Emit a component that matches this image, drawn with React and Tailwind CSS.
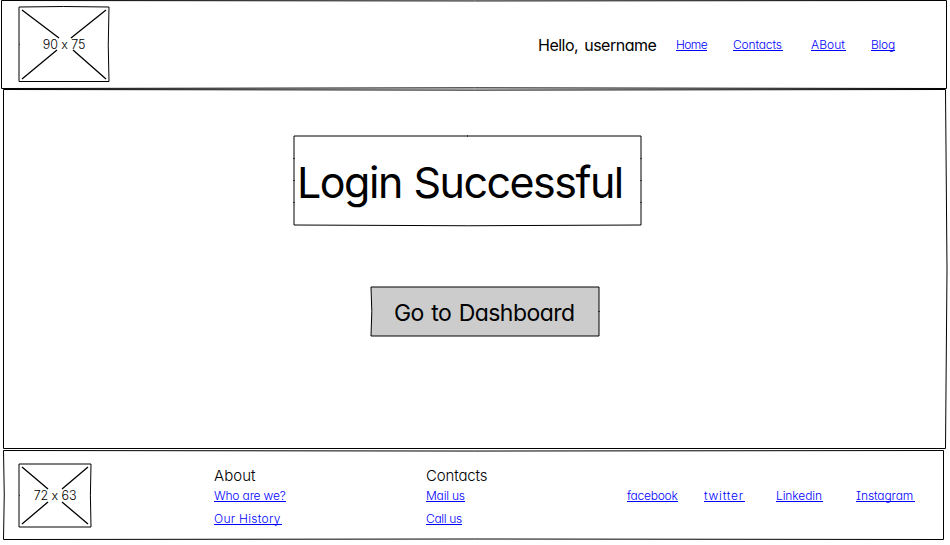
const FONT = "font-['Inter','Open_Sans',sans-serif] [font-feature-settings:'cv11','cv08','calt'_0]";

function Sketch({ w, h, d, fill = "none", ticks, cross }) {
  return (
    <svg className="absolute top-0 left-0 pointer-events-none overflow-visible" width={w} height={h} viewBox={`0 0 ${w} ${h}`} fill="none" stroke="#000" strokeWidth="1">
      <path d={d} fill={fill} />
      {cross && <path d={cross} strokeWidth="1.3" />}
      {ticks && <path d={ticks} strokeOpacity=".6" />}
    </svg>
  );
}

function Link({ children, className }) {
  return (
    <a href="#" className={`block h-[12px] whitespace-nowrap border-b border-[#0000ff] text-[12px] leading-[12px] font-[330] text-[#0000ff] ${className}`}>
      {children}
    </a>
  );
}

export default function App() {
  return (
    <div className={`flex h-[545px] w-[950px] flex-col overflow-hidden bg-white text-black ${FONT}`}>
      <header className="relative flex h-[89px] shrink-0 items-start pl-[18px]">
        <Sketch w={950} h={89} d="M1.5 .5 Q475 1.4 946.5 .5 V88.5 Q475 87.2 1.5 88.5 Z" />
        <div className="relative mt-[6px] flex h-[77px] w-[92px] items-center justify-center pt-[2px]">
          <Sketch w={92} h={77} d="M1 1 Q45 0 91 1 Q89.5 40 91 75.5 H1 Z" cross="M4 4 L41 32 M88 4 L53 32 M4 73 L39 44 M88 73 L55 44" ticks="M1 38.5 H2" />
          <span className="relative text-[12.5px] leading-none font-[360] tracking-[-0.1px] whitespace-pre">90 x 75</span>
        </div>
        <span className="mt-[37px] ml-[428px] w-[138px] text-[16px] leading-none font-[370] tracking-[-0.5px] whitespace-nowrap [word-spacing:2px]">Hello, username</span>
        <nav className="mt-[39px] flex">
          <Link className="w-[31px] tracking-[-0.6px]">Home</Link>
          <Link className="ml-[26px] w-[50px] tracking-[-0.15px]">Contacts</Link>
          <Link className="ml-[28px] w-[35px] tracking-[0.05px]">ABout</Link>
          <Link className="ml-[25px] w-[24px] tracking-[-0.25px]">Blog</Link>
        </nav>
      </header>

      <main className="relative flex h-[361px] shrink-0 flex-col items-start">
        <Sketch w={950} h={361} d="M3.5 .5 Q475 1.7 945.5 .5 Q948.5 180 945.5 359.5 H3.5 Z" />
        <div className="relative mt-[46px] ml-[293px] flex h-[92px] w-[350px] items-start pt-[26px] pl-[4px]">
          <Sketch
            w={350}
            h={92}
            d="M1 1 H348 V90 Q175 91.5 1 90 Z"
            ticks="M174.5 0 V2 M0 23.5 H2 M0 45.5 H2 M0 67.5 H2 M347 23.5 H349 M347 45.5 H349 M347 67.5 H349"
          />
          <h1 className="relative text-[43px] leading-none tracking-[-1.5px] whitespace-nowrap [word-spacing:1px]">Login Successful</h1>
        </div>
        <button className="relative mt-[59px] ml-[370px] flex h-[51px] w-[230px] items-start pt-[16px] pl-[24px]">
          <Sketch w={230} h={51} fill="#cccccc" d="M1 1 H229 V50 H1 Q2.6 25 1 1 Z" ticks="M228 25.5 H230" />
          <span className="relative text-[23px] leading-none font-[370] tracking-[-0.55px] whitespace-nowrap [word-spacing:1.5px]">Go to Dashboard</span>
        </button>
      </main>

      <footer className="relative flex h-[95px] shrink-0 items-start pl-[18px]">
        <Sketch w={950} h={95} d="M3.5 .5 Q475 1.6 943.5 .5 V89.5 Q475 88.5 3.5 89.5 Q5 45 3.5 .5 Z" />
        <div className="relative mt-[13px] flex h-[65px] w-[74px] items-center justify-center pt-[2px]">
          <Sketch w={74} h={65} d="M1 1 H73 Q71.8 32 73 64 H1 Z" cross="M4 4 L30 26 M70 4 L44 26 M4 61 L30 39 M70 61 L44 39" ticks="M1 32.5 H2" />
          <span className="relative text-[12.5px] leading-none font-[360] tracking-[-0.1px] whitespace-pre">72 x 63</span>
        </div>
        <section className="mt-[18px] ml-[122px] w-[212px]">
          <h2 className="text-[15px] leading-none font-[320] tracking-[0.05px]">About</h2>
          <Link className="mt-[7px] w-[72px] tracking-[-0.15px]">Who are we?</Link>
          <Link className="mt-[11px] w-[68px] tracking-[0.3px]">Our History</Link>
        </section>
        <section className="mt-[18px] w-[201px]">
          <h2 className="text-[15px] leading-none font-[320] tracking-[-0.15px]">Contacts</h2>
          <Link className="mt-[7px] w-[39px] tracking-[-0.2px]">Mail us</Link>
          <Link className="mt-[11px] w-[36px] tracking-[-0.35px]">Call us</Link>
        </section>
        <nav className="mt-[40px] flex">
          <Link className="w-[51px] tracking-[-0.25px]">facebook</Link>
          <Link className="ml-[26px] w-[41px] tracking-[0.75px]">twitter</Link>
          <Link className="ml-[31px] w-[47px] tracking-[-0.1px]">Linkedin</Link>
          <Link className="ml-[33px] w-[59px] tracking-[-0.1px]">Instagram</Link>
        </nav>
      </footer>
    </div>
  );
}
